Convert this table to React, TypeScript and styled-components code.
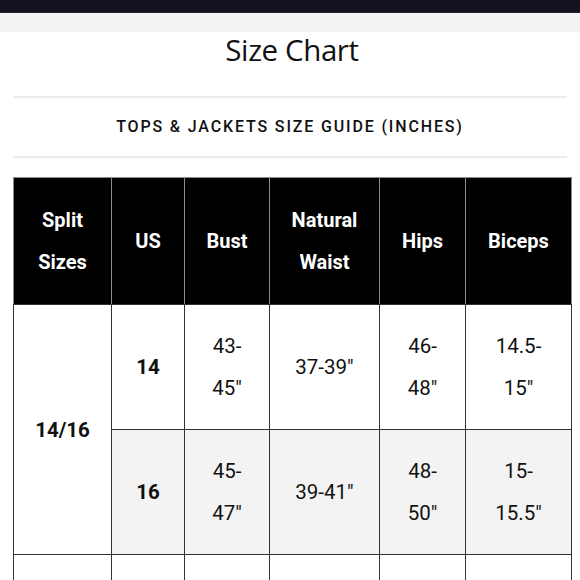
import React from "react";
import styled, { createGlobalStyle } from "styled-components";

const Global = createGlobalStyle`
  html, body { margin: 0; padding: 0; background: #ffffff; }
  body { font-family: Roboto, "Liberation Sans", Arial, sans-serif; color: #111; }
`;

const TopBar = styled.div`
  height: 13px;
  background: #15121f;
  border-bottom: 1px solid #2a2733;
  box-sizing: border-box;
`;

const Band = styled.div`
  height: 19px;
  background: #f3f3f3;
`;

const Page = styled.main`
  padding: 0 9px 0 13px;
`;

const Title = styled.h1`
  margin: 0;
  padding: 0;
  height: 64px;
  box-sizing: border-box;
  font-family: "Open Sans", Lato, sans-serif;
  font-weight: 400;
  font-size: 29.5px;
  line-height: 36px;
  text-align: center;
  color: #111;
  letter-spacing: -0.4px;
`;

const Divider = styled.hr`
  margin: 0 4px 0 0;
  border: 0;
  height: 2px;
  background: #ebebeb;
`;

const Subtitle = styled.h2`
  margin: 0;
  height: 58px;
  box-sizing: border-box;
  display: flex;
  align-items: center;
  justify-content: center;
  padding: 0 4px 2px 0;
  font-family: Roboto, sans-serif;
  font-weight: 500;
  font-size: 16px;
  letter-spacing: 1.85px;
  color: #111;
`;

const Spacer = styled.div`
  height: 19px;
`;

const Table = styled.table`
  width: 558px;
  border-collapse: collapse;
  table-layout: fixed;
  font-family: Roboto, sans-serif;
`;

const Th = styled.th`
  background: #000;
  color: #fff;
  font-weight: 700;
  font-size: 20px;
  line-height: 42px;
  padding: 21px 16px;
  height: 126px;
  box-sizing: border-box;
  border: 1.5px solid #8a8a8a;
  border-bottom-color: #333;
  text-align: center;
`;

const Td = styled.td<{ $shade?: boolean; $bold?: boolean }>`
  background: ${(p) => (p.$shade ? "#f3f3f3" : "#fff")};
  color: #111;
  font-weight: ${(p) => (p.$bold ? 700 : 400)};
  font-size: 20.5px;
  line-height: 42px;
  padding: 20px 16px;
  height: 124px;
  box-sizing: border-box;
  border: 1.5px solid #333;
  text-align: center;
  vertical-align: middle;
`;

const widths = [98, 73, 85, 110, 86, 106];
const headers = ["Split Sizes", "US", "Bust", "Natural Waist", "Hips", "Biceps"];

type Row = { us: string; bust: string; waist: string; hips: string; biceps: string };
const groups: { split: string; rows: Row[] }[] = [
  {
    split: "14/16",
    rows: [
      { us: "14", bust: "43-45\"", waist: "37-39\"", hips: "46-48\"", biceps: "14.5-15\"" },
      { us: "16", bust: "45-47\"", waist: "39-41\"", hips: "48-50\"", biceps: "15-15.5\"" },
    ],
  },
  {
    split: "18/20",
    rows: [
      { us: "18", bust: "47-49\"", waist: "41-43\"", hips: "50-52\"", biceps: "15.5-16\"" },
      { us: "20", bust: "49-51\"", waist: "43-45\"", hips: "52-54\"", biceps: "16-16.5\"" },
    ],
  },
];

export default function App() {
  return (
    <>
      <Global />
      <TopBar />
      <Band />
      <Page>
        <Title>Size Chart</Title>
        <Divider />
        <Subtitle>TOPS &amp; JACKETS SIZE GUIDE (INCHES)</Subtitle>
        <Divider />
        <Spacer />
        <Table>
          <colgroup>
            {widths.map((w, i) => (
              <col key={i} style={{ width: w }} />
            ))}
          </colgroup>
          <thead>
            <tr>
              {headers.map((h) => (
                <Th key={h}>{h}</Th>
              ))}
            </tr>
          </thead>
          <tbody>
            {groups.map((g) =>
              g.rows.map((r, i) => (
                <tr key={g.split + r.us}>
                  {i === 0 && (
                    <Td rowSpan={g.rows.length} $bold>
                      {g.split}
                    </Td>
                  )}
                  <Td $bold $shade={i % 2 === 1}>{r.us}</Td>
                  <Td $shade={i % 2 === 1}>{r.bust}</Td>
                  <Td $shade={i % 2 === 1}>{r.waist}</Td>
                  <Td $shade={i % 2 === 1}>{r.hips}</Td>
                  <Td $shade={i % 2 === 1}>{r.biceps}</Td>
                </tr>
              ))
            )}
          </tbody>
        </Table>
      </Page>
    </>
  );
}
